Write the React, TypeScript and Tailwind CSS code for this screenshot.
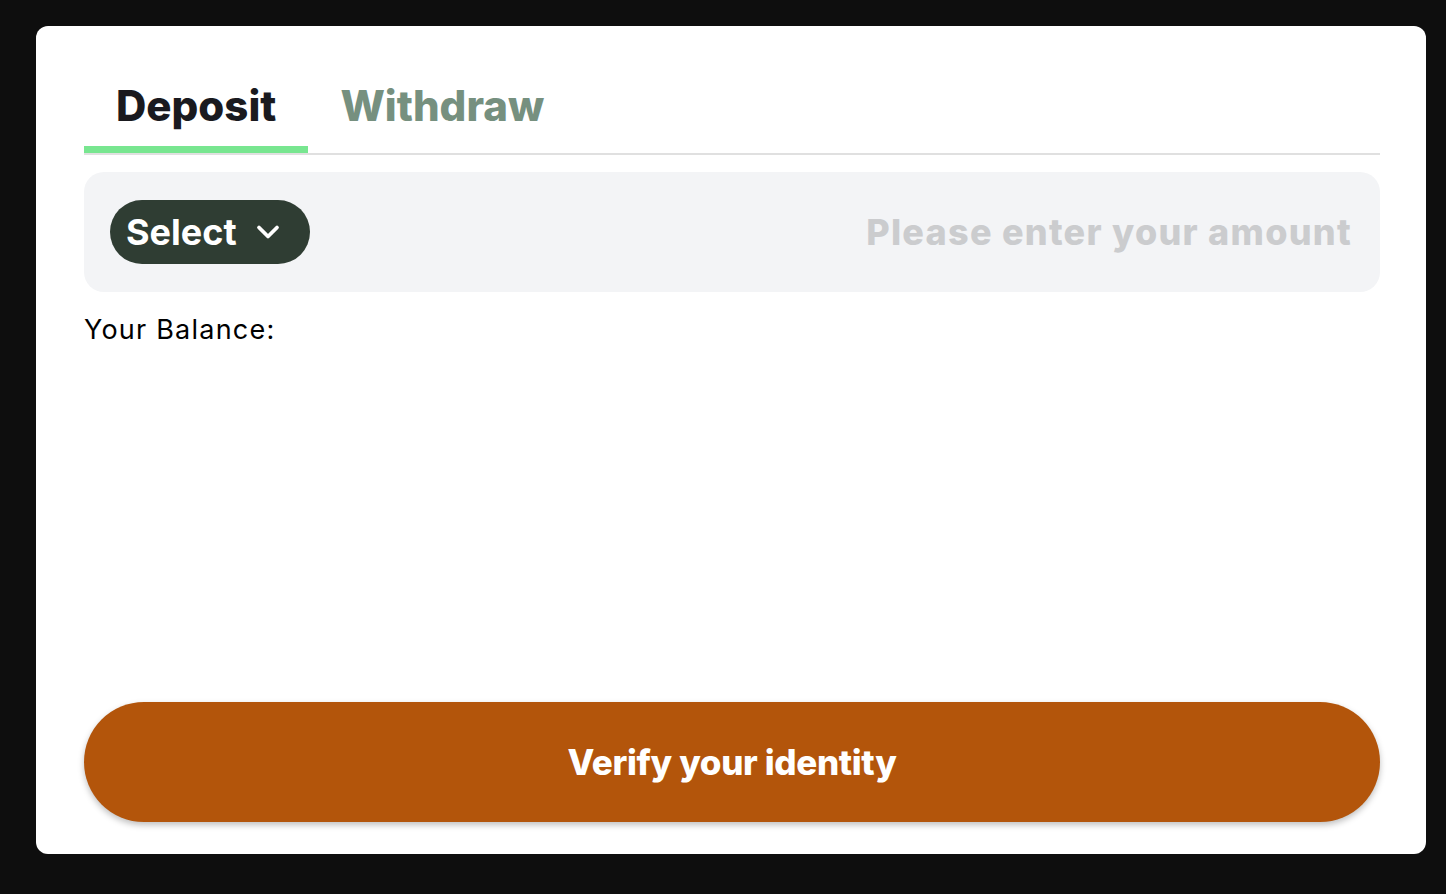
import { ChevronDown } from "lucide-react";

export default function App() {
  return (
    <div
      className="min-h-screen w-full bg-[#0e0e0e] pt-[26px] pl-[36px] pr-[20px]"
      style={{ fontFamily: "Inter, 'Noto Sans', sans-serif" }}
    >
      <div className="flex h-[828px] flex-col rounded-[12px] bg-white pl-12 pr-[46px] pt-[52px] pb-8">
        {/* tabs */}
        <div className="flex border-b-2 border-[#e0e0e0]">
          <button className="border-b-[7px] border-[#78e690] px-8 pb-3 text-[42px] leading-[56px] font-extrabold text-[#1a1a1f]">
            Deposit
          </button>
          <button className="border-b-[7px] border-transparent px-8 pb-3 text-[42px] leading-[56px] font-extrabold text-[#76907f]">
            Withdraw
          </button>
        </div>

        {/* amount input */}
        <div className="mt-[17px] flex h-[120px] items-center justify-between rounded-[20px] bg-[#f3f4f6] pl-[26px] pr-[28px]">
          <button className="flex h-16 w-[200px] items-center gap-[13px] rounded-full bg-[#2f3d33] pl-4 text-[36px] font-bold text-white">
            Select
            <ChevronDown size={36} strokeWidth={2.5} />
          </button>
          <span className="text-[36px] font-extrabold tracking-[0.035em] text-[#cbccce]">
            Please enter your amount
          </span>
        </div>

        <div className="mt-[18px] text-[27px] tracking-[0.045em] text-black">Your Balance:</div>

        <div className="flex-1" />

        <button className="h-[120px] w-full rounded-full bg-[#b3550b] text-[35px] font-extrabold tracking-[-0.01em] text-white shadow-[0_3px_6px_rgba(0,0,0,0.25)]">
          Verify your identity
        </button>
      </div>
    </div>
  );
}
